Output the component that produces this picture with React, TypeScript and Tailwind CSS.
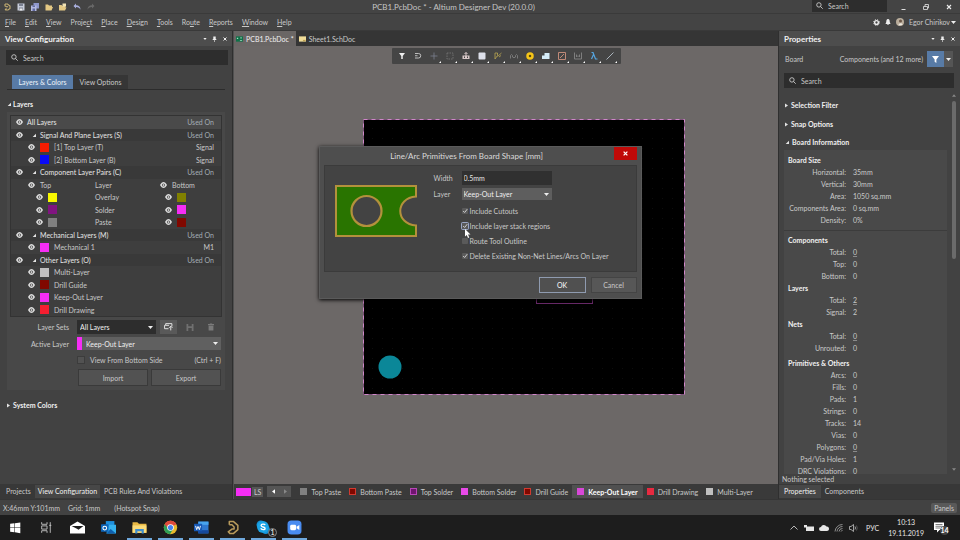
import React, { ReactNode } from "react";

const eye = (
  <svg viewBox="0 0 14 12" className="h-[6px] w-[7px] shrink-0" aria-hidden="true">
    <path d="M0 6C2 2 4.500 0 7 0s5 2 7 6c-2 4-4.500 6-7 6S2 10 0 6z" fill="#dcdcdc" />
    <circle cx="7" cy="6" r="3.200" fill="#4a4a4a" />
    <circle cx="7" cy="6" r="1.700" fill="#f2f2f2" />
  </svg>
);

function Magnifier() {
  return (
    <svg viewBox="0 0 12 12" className="h-[7px] w-[7px] shrink-0" fill="none" stroke="#cfcfcf" strokeWidth="1.500" aria-hidden="true">
      <circle cx="5" cy="5" r="3.800" />
      <path d="M7.800 7.800L11.500 11.500" />
    </svg>
  );
}

function Open() {
  return (
    <svg viewBox="0 0 6 6" className="h-[4px] w-[4px] shrink-0" aria-hidden="true">
      <path d="M6 1v5H1z" fill="#e4e4e4" />
    </svg>
  );
}

function Closed() {
  return (
    <svg viewBox="0 0 6 8" className="h-[5px] w-[3px] shrink-0" aria-hidden="true">
      <path d="M0 0l6 4-6 4z" fill="#e4e4e4" />
    </svg>
  );
}

function Caret({ className = "" }: { className?: string }) {
  return (
    <svg viewBox="0 0 10 6" className={"h-[3px] w-[5px] shrink-0 " + className} aria-hidden="true">
      <path d="M0 0h10L5 6z" fill="#eeeeee" />
    </svg>
  );
}

function Search({ label, className }: { label: string; className: string }) {
  return (
    <label className={"flex items-center gap-[5px] bg-[#2d2d2d] " + className}>
      <Magnifier />
      <input aria-label={label} placeholder="Search" className="w-full min-w-0 bg-transparent leading-3 outline-none placeholder:text-[#c6c6c6]" />
    </label>
  );
}

function PanelHeader({ title }: { title: string }) {
  return (
    <header className="flex h-[15px] shrink-0 items-center bg-[#4d4d4d] px-[5px]">
      <h2 className="flex-1 text-[8px] font-bold text-[#f0f0f0]">{title}</h2>
      <div className="flex items-center gap-[5px]">
        <button aria-label="Menu" className="flex h-2 w-[5px] items-center justify-center">
          <svg viewBox="0 0 8 5" className="h-[2px] w-[4px]"><path d="M0 0h8L4 5z" fill="#eee" /></svg>
        </button>
        <button aria-label="Pin" className="flex h-2 w-[5px] items-center justify-center">
          <svg viewBox="0 0 8 10" className="h-[6px] w-[5px]" fill="#eee"><path d="M2 1h4v4h1v1.500H1V5h1zM3.500 6.500h1V10h-1z" /></svg>
        </button>
        <button aria-label="Close" className="flex h-2 w-[5px] items-center justify-center">
          <svg viewBox="0 0 8 8" className="h-[4px] w-[4px]" stroke="#eee" strokeWidth="2"><path d="M1 1l6 6M7 1L1 7" /></svg>
        </button>
      </div>
    </header>
  );
}

function Select({ label, value, className, id }: { label: string; value: string; className: string; id?: string }) {
  return (
    <span className={"relative flex items-center " + className}>
      <select id={id} aria-label={label} className="h-full w-full appearance-none bg-transparent leading-3 text-[#f0f0f0] outline-none">
        <option>{value}</option>
      </select>
      <Caret className="pointer-events-none absolute right-[3px]" />
    </span>
  );
}

function Check({ label, checked = false, focus = false }: { label: string; checked?: boolean; focus?: boolean }) {
  return (
    <label className="flex h-[15px] items-center gap-[2px]">
      <span className={"relative flex h-[6px] w-[6px] rounded-[1px] " + (focus ? "ring-1 ring-[#9aa6c4]" : "")}>
        <input type="checkbox" defaultChecked={checked} className="h-[6px] w-[6px] appearance-none rounded-[1px] bg-[#5a5a5a]" />
        {checked && (
          <svg viewBox="0 0 8 8" className="pointer-events-none absolute inset-0 h-[6px] w-[6px]" fill="none" stroke="#d0d0d0" strokeWidth="1.300">
            <path d="M1.500 4L3.500 6 7 1.500" />
          </svg>
        )}
      </span>
      <span>{label}</span>
    </label>
  );
}

const swatch = "h-[9px] w-[9px] shrink-0 ";

function GroupRow({ name, first = false }: { name: string; first?: boolean }) {
  return (
    <div className={"flex flex-1 items-center pl-[5px] pr-[7px] " + (first ? "bg-[#4a4a4a]" : "bg-[#393939]")}>
      {eye}
      {!first && <span className="ml-[9px] flex"><Open /></span>}
      <span className="ml-[4px] flex-1 text-[#e6e6e6]">{name}</span>
      <span className="text-[#a4adb5]">Used On</span>
    </div>
  );
}

function LayerRow({ name, color, note = "" }: { name: string; color: string; note?: string }) {
  return (
    <div className="flex flex-1 items-center pl-[17px] pr-[7px]">
      {eye}
      <span className={swatch + "ml-[5px] " + color} />
      <span className="ml-[5px] flex-1">{name}</span>
      <span>{note}</span>
    </div>
  );
}

function PairRow({ name, top, bottom }: { name: string; top: string; bottom: string }) {
  return (
    <div className="grid flex-1 grid-cols-[84px_70px_1fr] items-center">
      <span className="flex items-center gap-[5px] pl-[25px]">{eye}<span className={swatch + top} /></span>
      <span>{name}</span>
      <span className="flex items-center gap-[5px]">{eye}<span className={swatch + bottom} /></span>
    </div>
  );
}

function LeftPanel() {
  return (
    <aside className="flex w-[233px] shrink-0 flex-col border-r border-[#2f2f2f] bg-[#424242]">
      <PanelHeader title="View Configuration" />
      <Search label="Search layers" className="ml-[6px] mr-[4px] mt-[4px] h-[15px] px-[5px]" />
      <div role="tablist" className="mx-[7px] mt-[10px] flex h-[15px] border-b border-[#2c2c2c] pl-[5px]">
        <button role="tab" aria-selected="true" className="w-[61px] bg-[#587ba6] text-[#eef3fa]">Layers &amp; Colors</button>
        <button role="tab" aria-selected="false" className="w-[55px] bg-[#363636]">View Options</button>
      </div>
      <h3 className="mt-[8px] flex h-3 items-center gap-[2px] pl-[7px] font-bold text-[#f0f0f0]"><Open />Layers</h3>
      <section className="mx-[7px] mt-[2px] bg-[#484848] px-[3px] pb-[4px] pt-[3px]">
        <div className="flex h-[202px] flex-col border border-[#333] bg-[#3e3e3e]">
          <GroupRow name="All Layers" first />
          <GroupRow name="Signal And Plane Layers (S)" />
          <LayerRow name="[1] Top Layer (T)" color="bg-[#f51c00]" note="Signal" />
          <LayerRow name="[2] Bottom Layer (B)" color="bg-[#0a0af5]" note="Signal" />
          <GroupRow name="Component Layer Pairs (C)" />
          <div className="grid flex-1 grid-cols-[84px_65px_1fr] items-center">
            <span className="flex items-center gap-[5px] pl-[17px]">{eye}Top</span>
            <span>Layer</span>
            <span className="flex items-center gap-[5px]">{eye}Bottom</span>
          </div>
          <PairRow name="Overlay" top="bg-[#f8f800]" bottom="bg-[#808000]" />
          <PairRow name="Solder" top="bg-[#801480]" bottom="bg-[#f52df5]" />
          <PairRow name="Paste" top="bg-[#808080]" bottom="bg-[#800800]" />
          <GroupRow name="Mechanical Layers (M)" />
          <LayerRow name="Mechanical 1" color="bg-[#f52df5]" note="M1" />
          <GroupRow name="Other Layers (O)" />
          <LayerRow name="Multi-Layer" color="bg-[#c0c0c0]" />
          <LayerRow name="Drill Guide" color="bg-[#800800]" />
          <LayerRow name="Keep-Out Layer" color="bg-[#f52df5]" />
          <LayerRow name="Drill Drawing" color="bg-[#f51e30]" />
        </div>
        <div className="mt-[3px] grid grid-cols-[59px_1fr] items-center gap-x-[8px] gap-y-[3px] pr-[1px]">
          <label htmlFor="sets" className="text-right">Layer Sets</label>
          <div className="flex items-center gap-[4px]">
            <Select id="sets" label="Layer Sets" value="All Layers" className="h-[14px] w-[79px] bg-[#2d2d2d] pl-[3px]" />
            <button aria-label="New layer set" className="flex h-[14px] w-[17px] items-center justify-center bg-[#595959]">
              <svg viewBox="0 0 16 14" className="h-[8px] w-[9px]" fill="none" stroke="#eee" strokeWidth="1.600"><path d="M8 10H1V4h2V1h11v5M3 4h6M12 6v7M9 8.500L12 5.500l3 3" /></svg>
            </button>
            <button aria-label="Save layer set" className="flex h-[14px] w-[17px] items-center justify-center">
              <svg viewBox="0 0 12 12" className="h-[7px] w-[8px]" fill="#707070"><path d="M0 0h12v12H0zM3 0v4h6V0zM3 7v5h6V7z" fillRule="evenodd" /></svg>
            </button>
            <button aria-label="Delete layer set" className="flex h-[14px] w-[17px] items-center justify-center">
              <svg viewBox="0 0 10 12" className="h-[8px] w-[6px]" fill="#7a7a7a"><path d="M3 0h4v1h3v2H0V1h3zM1 4h8v8H1z" /></svg>
            </button>
          </div>
          <label htmlFor="active" className="text-right">Active Layer</label>
          <Select id="active" label="Active Layer" value="Keep-Out Layer" className="h-[13px] border-l-[5px] border-[#f52df5] bg-[#606060] pl-[4px]" />
          <span />
          <div className="flex h-[13px] items-center justify-between">
            <label className="flex items-center gap-[5px]">
              <input type="checkbox" className="h-[8px] w-[8px] appearance-none border border-[#3c3c3c] bg-[#525252]" />
              View From Bottom Side
            </label>
            <span>(Ctrl + F)</span>
          </div>
          <span />
          <div className="grid h-[17px] grid-cols-2 gap-[3px] pl-[1px]">
            <button className="border border-[#3a3a3a] bg-[#525252]">Import</button>
            <button className="border border-[#3a3a3a] bg-[#525252]">Export</button>
          </div>
        </div>
      </section>
      <h3 className="mt-[9px] flex h-3 items-center gap-[3px] pl-[7px] font-bold text-[#f0f0f0]"><Closed />System Colors</h3>
      <nav className="mt-auto flex h-[15px] shrink-0 items-center bg-[#383838] leading-[13px]">
        <button className="pl-[6px] pr-[4px]">Projects</button>
        <button className="bg-[#474747] px-[3px] text-[#f0f0f0]">View Configuration</button>
        <button className="px-[4px]">PCB Rules And Violations</button>
      </nav>
    </aside>
  );
}

type Row = [string, string, boolean?];

function Stats({ title, rows, className = "" }: { title: string; rows: Row[]; className?: string }) {
  return (
    <section className={className}>
      <h4 className="h-[12px] pl-[4px] leading-[12px] font-bold text-[#f0f0f0]">{title}</h4>
      <dl>
        {rows.map(([k, v, u]) => (
          <div key={k} className="grid h-3 grid-cols-[62px_1fr] gap-[7px] leading-3">
            <dt className="text-right">{k}:</dt>
            <dd className={u ? "underline decoration-[#8a8a8a]" : ""}>{v}</dd>
          </div>
        ))}
      </dl>
    </section>
  );
}

function RightPanel() {
  const heading = "flex h-3 items-center gap-[3px] pl-[6px] font-bold text-[#f0f0f0] ";
  return (
    <aside className="flex w-[182px] shrink-0 flex-col border-l border-[#2f2f2f] bg-[#424242]">
      <PanelHeader title="Properties" />
      <div className="mt-[5px] flex h-[16px] shrink-0 items-center pl-[6px] pr-[7px]">
        <span className="flex-1">Board</span>
        <span className="mr-[4px]">Components (and 12 more)</span>
        <button aria-label="Filter" className="flex h-[16px] w-[17px] items-center justify-center bg-[#587ba6]">
          <svg viewBox="0 0 12 12" className="h-[7px] w-[7px]" fill="#fff"><path d="M0 0h12L7.500 6v6l-3-2V6z" /></svg>
        </button>
        <button aria-label="Filter options" className="flex h-[16px] w-[9px] items-center justify-center bg-[#555]"><Caret /></button>
      </div>
      <Search label="Search properties" className="ml-[5px] mr-[6px] mt-[6px] h-[15px] shrink-0 px-[5px]" />
      <div className="flex min-h-0 flex-1">
        <div className="flex min-w-0 flex-1 flex-col overflow-hidden">
          <h3 className={heading + "mt-[11px]"}><Closed />Selection Filter</h3>
          <h3 className={heading + "mt-[7px]"}><Closed />Snap Options</h3>
          <h3 className={heading + "mt-[6px]"}><Open />Board Information</h3>
          <div className="ml-[5px] mt-[2px] min-h-0 flex-1 overflow-hidden bg-[#494949] pt-[4px]">
            <Stats title="Board Size" rows={[["Horizontal", "35mm"], ["Vertical", "30mm"], ["Area", "1050 sq.mm"], ["Components Area", "0 sq.mm"], ["Density", "0%"]]} className="border-b border-[#3c3c3c] pb-[4px]" />
            <Stats title="Components" rows={[["Total", "0", true], ["Top", "0"], ["Bottom", "0"]]} className="mt-[3px]" />
            <Stats title="Layers" rows={[["Total", "2", true], ["Signal", "2"]]} />
            <Stats title="Nets" rows={[["Total", "0", true], ["Unrouted", "0"]]} />
            <Stats title="Primitives & Others" rows={[["Arcs", "0"], ["Fills", "0"], ["Pads", "1"], ["Strings", "0"], ["Tracks", "14"], ["Vias", "0"], ["Polygons", "0", true], ["Pad/Via Holes", "1"], ["DRC Violations", "0", true]]} className="mt-[3px]" />
          </div>
        </div>
        <div className="flex w-[13px] flex-col items-center pb-[3px] pt-[6px]">
          <svg viewBox="0 0 8 5" className="h-[3px] w-[4px]" fill="#888"><path d="M0 5h8L4 0z" /></svg>
          <div className="mt-[4px] h-[158px] w-[4px] rounded-full bg-[#6b6b6b]" />
          <svg viewBox="0 0 8 5" className="mt-auto h-[3px] w-[4px]" fill="#888"><path d="M0 0h8L4 5z" /></svg>
        </div>
      </div>
      <p className="h-[10px] shrink-0 pl-[3px] leading-[10px]">Nothing selected</p>
      <nav className="flex h-[15px] shrink-0 items-center bg-[#383838] leading-[13px]">
        <button className="bg-[#474747] px-[5px] text-[#f0f0f0]">Properties</button>
        <button className="px-[4px]">Components</button>
      </nav>
    </aside>
  );
}

const tools: { name: string; art: ReactNode; menu?: boolean }[] = [
  { name: "Filter", art: <path d="M2 2h12L9.500 8v6h-3V8z" fill="#eee" /> },
  { name: "Snap", art: <path d="M2 3h7a4.500 4.500 0 010 9H2M2 7.500h5" fill="none" stroke="#ccc" strokeWidth="1.800" /> },
  { name: "Move", menu: true, art: <path d="M8 1v14M1 8h14" stroke="#7b8290" strokeWidth="1.600" /> },
  { name: "Select", menu: true, art: <path d="M2 2h12v12H2z" fill="none" stroke="#7c7c7c" strokeWidth="1.500" strokeDasharray="3 2" /> },
  { name: "Align", menu: true, art: <><path d="M1 7h14v7H1z" fill="#d8c8c8" /><path d="M8 1v11M5 4l3-3 3 3" fill="none" stroke="#d8c8c8" strokeWidth="2" /><path d="M4 9h2v3H4zM10 9h2v3h-2z" fill="#454545" /></> },
  { name: "Component", menu: true, art: <rect x="1" y="1" width="14" height="14" rx="2" fill="#dde0ea" /> },
  { name: "Route", menu: true, art: <path d="M2 14V2h5v5L2 14M7 9l8-7M10 10l4-3" fill="none" stroke="#b7a552" strokeWidth="1.600" /> },
  { name: "Tune", menu: true, art: <path d="M1 13V7q2-4 4 0v3q3 3 6 0V7q2-4 4 0v6" fill="none" stroke="#7f7f7f" strokeWidth="1.800" /> },
  { name: "Via", menu: true, art: <circle cx="8" cy="8" r="5" fill="#5a4a10" stroke="#f5c518" strokeWidth="5" /> },
  { name: "Polygon", menu: true, art: <path d="M0 14V7h5V2h10v12z" fill="#d4ecf8" /> },
  { name: "Rule", menu: true, art: <path d="M1 1h14v14H1zM4 12l8-8" fill="none" stroke="#c08a78" strokeWidth="2" /> },
  { name: "Dimension", menu: true, art: <path d="M1 1v13h14V1M5 10V5M8 10V7M11 10V5" fill="none" stroke="#858585" strokeWidth="1.800" /> },
  { name: "String", menu: true, art: <path d="M3 1h3l5 13h4M7 5L3 14" fill="none" stroke="#55a5e0" strokeWidth="2.400" /> },
  { name: "Line", menu: true, art: <path d="M1 15L15 1" stroke="#b4c0c8" strokeWidth="1.800" /> },
];

const layerTabs: [string, string, boolean?][] = [
  ["Top Paste", "bg-[#808080]"],
  ["Bottom Paste", "border border-[#d03a30] bg-[#800800]"],
  ["Top Solder", "border border-[#b848b8] bg-[#701470]"],
  ["Bottom Solder", "bg-[#e84ae8]"],
  ["Drill Guide", "border border-[#d03a30] bg-[#800800]"],
  ["Keep-Out Layer", "bg-[#d848d8]", true],
  ["Drill Drawing", "bg-[#e82a40]"],
  ["Multi-Layer", "bg-[#c0c0c0]"],
];

function Workspace() {
  return (
    <main className="flex min-w-0 flex-1 flex-col border-l border-[#505050]">
      <div role="tablist" className="flex h-[15px] shrink-0 bg-[#353535]">
        <button role="tab" aria-selected="true" className="flex items-center gap-[3px] bg-[#6a6665] px-[2px] whitespace-nowrap text-[#f0f0f0]">
          <svg viewBox="0 0 16 12" className="h-[6px] w-[7px] shrink-0"><rect width="16" height="12" fill="#0f7048" /><path d="M2 3h3v3H2zM10 2h3v3h-3zM9 8h5v2H9z" fill="#9fe0c0" /></svg>
          PCB1.PcbDoc *
        </button>
        <button role="tab" aria-selected="false" className="flex items-center gap-[3px] px-[3px] whitespace-nowrap">
          <svg viewBox="0 0 16 12" className="h-[6px] w-[7px] shrink-0"><rect width="16" height="12" fill="#f0dc98" /><path d="M9 8h6v3H9z" fill="#bfa050" /></svg>
          Sheet1.SchDoc
        </button>
      </div>
      <div className="relative flex min-h-0 flex-1 flex-col items-center overflow-hidden bg-[#6c6867] pt-[2px]">
        <div role="toolbar" aria-label="Active bar" className="flex h-[16px] w-[229px] items-center justify-between rounded-[1px] bg-[#454545] px-[5px]">
          {tools.map((t) => (
            <button key={t.name} aria-label={t.name} className="relative flex h-[16px] w-[10px] items-center justify-center">
              <svg viewBox="0 0 16 16" className="h-[8px] w-[8px]">{t.art}</svg>
              {t.menu && <svg viewBox="0 0 4 4" className="absolute -right-[2px] bottom-[1px] h-[2px] w-[2px]"><path d="M4 0v4H0z" fill="#fff" /></svg>}
            </button>
          ))}
        </div>
        <svg viewBox="0 0 324 278" className="absolute left-[128px] top-[72px] h-[278px] w-[324px]" role="img" aria-label="Board">
          <defs>
            <pattern id="grid" width="10" height="10" patternUnits="userSpaceOnUse"><rect width="1" height="1" fill="#0d0d0d" /></pattern>
          </defs>
          <rect x="1" y="1" width="322" height="276" fill="#000" />
          <rect x="1" y="1" width="322" height="276" fill="url(#grid)" />
          <rect x="1.500" y="1.500" width="321" height="275" fill="none" stroke="#7d527a" />
          <rect x="1.500" y="1.500" width="321" height="275" fill="none" stroke="#cf88c8" strokeDasharray="4 4" />
          <rect x="174.500" y="150.500" width="56" height="35" fill="none" stroke="#6b2a6b" />
          <circle cx="28" cy="249" r="11.500" fill="#0b8798" />
        </svg>
      </div>
      <div className="flex h-[15px] shrink-0 items-center bg-[#3a3a3a] pl-[2px]">
        <span className="h-[8px] w-[15px] shrink-0 bg-[#f52df5]" />
        <button className="ml-[1px] bg-[#555] px-[2px] leading-[10px]">LS</button>
        <button aria-label="Scroll left" className="ml-[4px] flex h-[11px] w-[12px] items-center justify-center bg-[#555]"><svg viewBox="0 0 4 6" className="h-[5px] w-[3px]"><path d="M4 0v6L0 3z" fill="#fff" /></svg></button>
        <button aria-label="Scroll right" className="flex h-[11px] w-[12px] items-center justify-center bg-[#555]"><svg viewBox="0 0 4 6" className="h-[5px] w-[3px]"><path d="M0 0v6l4-3z" fill="#888" /></svg></button>
        <div role="tablist" className="ml-[5px] flex">
          {layerTabs.map(([name, color, active]) => (
            <button key={name} role="tab" aria-selected={!!active} className={"flex h-[13px] items-center gap-[4px] whitespace-nowrap " + (active ? "bg-[#505050] px-[5px] font-bold text-white" : "px-[4px]")}>
              <span className={"h-[7px] w-[7px] shrink-0 " + color} />
              {name}
            </button>
          ))}
        </div>
      </div>
    </main>
  );
}

function Dialog() {
  return (
    <div role="dialog" aria-labelledby="dlg" className="absolute inset-x-0 top-[146px] mx-auto flex w-[323px] flex-col border border-[#5a5a5a] bg-[#4e4e4e] px-[4px] pb-[5px] shadow-[0_1px_4px_#000]">
      <div className="relative flex h-[18px] items-center justify-center pr-[27px]">
        <h2 id="dlg" className="text-[8px] text-[#dadada]">Line/Arc Primitives From Board Shape [mm]</h2>
        <button aria-label="Close dialog" className="absolute right-0 top-0 flex h-[13px] w-[23px] items-center justify-center bg-[#c00a08]">
          <svg viewBox="0 0 8 8" className="h-[5px] w-[5px]" stroke="#fff" strokeWidth="2"><path d="M1 1l6 6M7 1L1 7" /></svg>
        </button>
      </div>
      <div className="flex h-[107px] border border-[#3b3b3b] bg-[#434343] pl-[10px] pt-[5px]">
        <svg viewBox="0 0 82 52" className="mt-[14px] h-[52px] w-[82px] shrink-0" role="img" aria-label="Board shape preview">
          <path d="M1 1H81V11.500C60 13 60 39 81 40.500V51H1z" fill="#297400" stroke="#b3913c" strokeWidth="2" />
          <circle cx="31.500" cy="26" r="15" fill="#434343" stroke="#b3913c" strokeWidth="2.200" />
        </svg>
        <div className="ml-[17px] flex flex-col">
          <div className="grid grid-cols-[19px_90px] items-center gap-x-[9px] gap-y-[3px]">
            <label htmlFor="w">Width</label>
            <input id="w" defaultValue="0.5mm" className="h-[14px] w-full bg-[#303030] px-[2px] text-[#e6e6e6] outline-none" />
            <label htmlFor="l">Layer</label>
            <Select id="l" label="Layer" value="Keep-Out Layer" className="h-[12px] bg-[#5e5e5e] pl-[2px]" />
          </div>
          <div className="ml-[28px] mt-[3px] flex flex-col whitespace-nowrap">
            <Check label="Include Cutouts" checked />
            <Check label="Include layer stack regions" checked focus />
            <Check label="Route Tool Outline" />
            <Check label="Delete Existing Non-Net Lines/Arcs On Layer" checked />
          </div>
        </div>
      </div>
      <div className="mt-[5px] flex h-[16px] justify-end gap-[5px]">
        <button className="w-[47px] border border-[#8f9bb0] bg-[#505050] text-white">OK</button>
        <button className="w-[46px] border border-[#444] bg-[#575757]">Cancel</button>
      </div>
      <svg viewBox="0 0 12 18" className="pointer-events-none absolute left-[145px] top-[82px] h-[9px] w-[6px]"><path d="M0 0v15l3.500-3 2.500 6 2.500-1L6 11h5z" fill="#fff" /></svg>
    </div>
  );
}

const menus: [string, string, string][] = [
  ["", "F", "ile"], ["", "E", "dit"], ["", "V", "iew"], ["Proje", "c", "t"], ["", "P", "lace"], ["", "D", "esign"],
  ["", "T", "ools"], ["Ro", "u", "te"], ["", "R", "eports"], ["", "W", "indow"], ["", "H", "elp"],
];

const quick: { name: string; art: ReactNode }[] = [
  { name: "Altium", art: <path d="M4 2h5l5 4v5l-4 3H4M4 2v4l4 2 2-1M4 14l3-3" fill="none" stroke="#c4ae72" strokeWidth="2.200" /> },
  { name: "Save", art: <><path d="M1 1h14v14H1z" fill="#c8cdda" /><path d="M4 1h8v5H4zM4 9h8v6H4z" fill="#7a8090" /><path d="M5 11h6v4H5z" fill="#eee" /></> },
  { name: "Save all", art: <><path d="M5 0h11v11H5z" fill="#8f97cc" /><path d="M0 5h11v11H0z" fill="#b5bae0" /><path d="M3 5h5v3H3zM3 11h5v5H3z" fill="#626aa0" /></> },
  { name: "Open", art: <path d="M1 3h5l2 2h6v3h2l-3 7H1z" fill="#e3c884" /> },
  { name: "Open project", art: <><path d="M0 4h5l2 2h6v3h2l-3 6H0z" fill="#e3c884" /><path d="M7 1h7v6H7z" fill="#f1e3b5" /></> },
  { name: "Undo", art: <path d="M1 6l5-5v3.500c6 0 9 3 9 9-2-4-4-5.500-9-5.500V11z" fill="#a9afdd" /> },
  { name: "Redo", art: <path d="M15 6l-5-5v3.500c-6 0-9 3-9 9 2-4 4-5.500 9-5.500V11z" fill="#686868" /> },
];

function TopBars() {
  return (
    <header className="shrink-0 bg-[#444444]">
      <div className="relative flex h-[14px] items-center border-b border-[#3a3a3a] pl-[3px]">
        <div className="flex gap-[6px]">
          {quick.map((q) => (
            <button key={q.name} aria-label={q.name} className="h-[8px] w-[8px]"><svg viewBox="0 0 16 16" className="h-[8px] w-[8px]">{q.art}</svg></button>
          ))}
        </div>
        <h1 className="flex-1 text-center text-[8px] text-[#c4c4c4]">PCB1.PcbDoc * - Altium Designer Dev (20.0.0)</h1>
        <Search label="Search commands" className="mb-[2px] h-[12px] w-[75px] px-[4px]" />
        <div className="flex items-center gap-[17px] pl-[14px] pr-[8px]">
          <button aria-label="Minimize" className="h-[6px] w-[5px]"><svg viewBox="0 0 10 12" className="h-[6px] w-[5px]"><path d="M1 11h8" stroke="#ddd" strokeWidth="2" /></svg></button>
          <button aria-label="Restore" className="h-[6px] w-[6px]"><svg viewBox="0 0 12 12" className="h-[6px] w-[6px]" fill="none" stroke="#ddd" strokeWidth="1.700"><path d="M1 5h8v6H1zM4 5V1h7v7H9" /></svg></button>
          <button aria-label="Exit" className="h-[6px] w-[6px]"><svg viewBox="0 0 12 12" className="h-[6px] w-[6px]" stroke="#eee" strokeWidth="2.200"><path d="M2 2l8 8M10 2l-8 8" /></svg></button>
        </div>
      </div>
      <div className="flex h-[17px] items-center justify-between border-b border-[#393939] pl-[5px] pr-[4px]">
        <nav className="flex gap-[9px]">
          {menus.map(([a, b, c]) => (
            <button key={a + b + c}>{a}<u>{b}</u>{c}</button>
          ))}
        </nav>
        <div className="flex items-center gap-[5px]">
          <svg viewBox="0 0 12 12" className="h-[7px] w-[7px]"><circle cx="6" cy="6" r="3.200" fill="none" stroke="#eee" strokeWidth="2.400" /><circle cx="6" cy="6" r="5" fill="none" stroke="#eee" strokeWidth="1.500" strokeDasharray="2 2" /></svg>
          <svg viewBox="0 0 12 12" className="h-[6px] w-[6px]" fill="#eee"><path d="M6 0c3 0 3.500 3 3.500 6L11 10H1l1.500-4C2.500 3 3 0 6 0zM4.500 10.500h3V12h-3z" /></svg>
          <svg viewBox="0 0 16 16" className="h-[8px] w-[8px]"><circle cx="8" cy="8" r="8" fill="#b9ad9c" /><circle cx="9" cy="6" r="3" fill="#6a5647" /><path d="M5 15c0-6 8-6 8-1z" fill="#ece8e0" /></svg>
          <button className="flex items-center gap-[1px]">Egor Chirikov<Caret /></button>
        </div>
      </div>
    </header>
  );
}

const apps: { name: string; art: ReactNode; running?: boolean }[] = [
  { name: "Start", art: <path d="M4 7l8-1v8H4zM13 6l10-1.500V14H13zM4 15h8v8l-8-1zM13 15h10v9.500L13 23z" fill="#fff" /> },
  { name: "Task view", art: <path d="M5 4v4h10V4M5 24v-4h10v4M5 11h10v6H5zM21 4v20M19 10h4" fill="none" stroke="#ccc" strokeWidth="1.600" /> },
  { name: "Mail", art: <><path d="M0 11L14 3l14 8v14H0z" fill="#fff" /><path d="M3 11h22l-9 7-4-2z" fill="#1d1d1d" /></> },
  { name: "Outlook", art: <><path d="M9 2h16v14H9z" fill="#1f8fdc" /><path d="M15 9h13v16H10z" fill="#35b1ee" /><path d="M10 25l8-8 10 8z" fill="#0e5fae" /><rect x="0" y="8" width="14" height="14" rx="1" fill="#0c64b8" /><circle cx="7" cy="15" r="3.500" fill="none" stroke="#fff" strokeWidth="2" /></> },
  { name: "Explorer", running: true, art: <><path d="M1 4h9l3 3h14v17H1z" fill="#e9b944" /><path d="M1 10h26v14H1z" fill="#fbdc7a" /><path d="M6 25v-8h16v8h-4v-4h-8v4z" fill="#3e8ed0" /></> },
  { name: "Chrome", running: true, art: <><circle cx="14" cy="14" r="12.500" fill="#e8b92c" /><path d="M14 14L3.200 7.800A12.500 12.500 0 0124.800 7.800z" fill="#dd4a3c" /><path d="M14 14L3.200 7.800A12.500 12.500 0 0013 26.500L19 17z" fill="#2e9f55" /><path d="M14 8h11a12.500 12.500 0 00-21.800-.2L9 16z" fill="#dd4a3c" /><circle cx="14" cy="14" r="6.200" fill="#fff" /><circle cx="14" cy="14" r="4.800" fill="#4684ee" /></> },
  { name: "Word", running: true, art: <><path d="M8 3h19v22H8z" fill="#2f78d0" /><path d="M8 3h19v6H8z" fill="#48a4ee" /><path d="M8 19h19v6H8z" fill="#15489c" /><rect x="0" y="7" width="15" height="14" rx="1" fill="#1758b4" /><path d="M3 11l2 7 2.500-6 2.500 6 2-7" fill="none" stroke="#fff" strokeWidth="1.800" /></> },
  { name: "Altium Designer", running: true, art: <path d="M8 9V3h8l8 7v8l-8 7H9l-3-3 7-5h4v-4l-4-4H8" fill="none" stroke="#b99b5c" strokeWidth="2.800" strokeLinejoin="round" /> },
  { name: "Skype", running: true, art: <><circle cx="9" cy="9" r="8" fill="#1593d8" /><circle cx="18" cy="18" r="8" fill="#1593d8" /><circle cx="13" cy="13" r="11" fill="#1ca4e6" /><path d="M17 9.500c-1-2.500-7.500-2.500-7.500.8 0 3.500 7.500 2 7.500 5.500 0 3.200-7 3-8-.3" fill="none" stroke="#fff" strokeWidth="2.500" /></> },
  { name: "Zoom", running: true, art: <><rect x="1" y="1" width="26" height="26" rx="7" fill="#4a8cf0" /><rect x="6" y="9" width="11" height="10" rx="2.500" fill="#fff" /><path d="M18 12.500L23 9.500v9l-5-3z" fill="#fff" /></> },
];

function Taskbar() {
  return (
    <footer className="flex h-[25px] shrink-0 items-stretch justify-between bg-[#1d1d1d]">
      <div className="flex">
        {apps.map((a) => (
          <button key={a.name} aria-label={a.name} className="relative flex w-[31px] items-center justify-center">
            <svg viewBox="0 0 28 28" className="h-[15px] w-[15px]">{a.art}</svg>
            {a.running && <span className="absolute inset-x-[3px] bottom-0 h-[2px] bg-[#6fa8dc]" />}
            {a.name === "Skype" && <span className="absolute bottom-[3px] right-[2px] flex h-[9px] w-[9px] items-center justify-center rounded-full border border-[#888] bg-[#222] text-[7px] leading-none text-white">1</span>}
          </button>
        ))}
      </div>
      <div className="flex items-center pr-[11px] text-[#e6e6e6]">
        <div className="flex items-center gap-[5px]">
          <svg viewBox="0 0 20 20" className="h-[10px] w-[10px]" fill="none" stroke="#ddd" strokeWidth="1.600"><path d="M3 13l7-7 7 7" /></svg>
          <svg viewBox="0 0 20 20" className="h-[10px] w-[10px]" fill="#e6e6e6"><path d="M4 7h16v9H4zM0 4h6v5H0z" /></svg>
          <svg viewBox="0 0 20 20" className="h-[10px] w-[10px]" fill="#e6e6e6"><path d="M4 16a4 4 0 010-8 6 6 0 0111-1 4 4 0 011 9z" /></svg>
          <svg viewBox="0 0 20 20" className="h-[10px] w-[10px]" fill="none" stroke="#aaa" strokeWidth="1.600"><path d="M2 17A15 15 0 0117 3M6 17A11 11 0 0117 7M10 17a7 7 0 017-6M14 17a3 3 0 013-2" /></svg>
          <svg viewBox="0 0 20 20" className="h-[10px] w-[10px]" fill="none" stroke="#ccc" strokeWidth="1.500"><path d="M1 7h3l5-4v14l-5-4H1zM12 7q2 3 0 6" /><path d="M15 5q3 5 0 10" stroke="#666" /></svg>
        </div>
        <span className="ml-[7px]">РУС</span>
        <time className="ml-[9px] flex flex-col items-center leading-[11px]"><span>10:13</span><span>19.11.2019</span></time>
        <button aria-label="Notifications" className="relative ml-[10px] h-[14px] w-[15px]">
          <svg viewBox="0 0 22 22" className="h-[11px] w-[11px]"><path d="M0 1h20v15h-9l-5 5v-5H0z" fill="#fff" /><path d="M3 5h14M3 8.500h14M3 12h9" stroke="#333" strokeWidth="1.300" /></svg>
          <span className="absolute bottom-0 right-0 flex h-[9px] w-[9px] items-center justify-center rounded-full bg-[#444] text-[7px] leading-none font-bold text-white">14</span>
        </button>
      </div>
    </footer>
  );
}

export default function App() {
  return (
    <div className="relative flex h-screen w-full flex-col overflow-hidden bg-[#424242] font-[Lato,'Open_Sans',sans-serif] text-[7px] leading-3 text-[#c9c9c9]">
      <TopBars />
      <div className="flex min-h-0 flex-1">
        <LeftPanel />
        <Workspace />
        <RightPanel />
      </div>
      <div className="flex h-[16px] shrink-0 items-center gap-[8px] border-t border-[#353535] bg-[#424242] pl-[3px]">
        <span>X:46mm Y:101mm</span>
        <span>Grid: 1mm</span>
        <span className="ml-[6px]">(Hotspot Snap)</span>
        <button className="ml-auto mr-[3px] rounded-[2px] bg-[#595959] px-[3px] leading-[10px]">Panels</button>
      </div>
      <Taskbar />
      <Dialog />
    </div>
  );
}
